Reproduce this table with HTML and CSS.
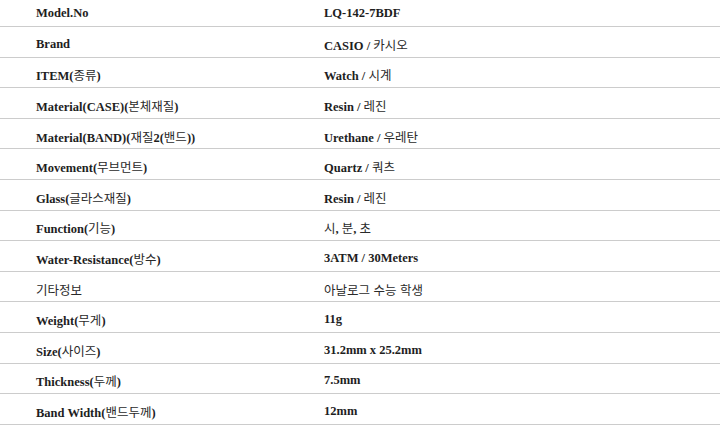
FILE: index.html
```html
<!DOCTYPE html>
<html lang="ko">
<head>
<meta charset="utf-8">
<title>Spec</title>
<link rel="stylesheet" href="styles.css">
</head>
<body>
<div class="spec">
  <div class="row"><div class="k">Model.No</div><div class="v">LQ-142-7BDF</div></div>
  <div class="row"><div class="k">Brand</div><div class="v">CASIO / <span class="ko">카시오</span></div></div>
  <div class="row"><div class="k">ITEM(<span class="ko">종류</span>)</div><div class="v">Watch / <span class="ko">시계</span></div></div>
  <div class="row"><div class="k">Material(CASE)(<span class="ko">본체재질</span>)</div><div class="v">Resin / <span class="ko">레진</span></div></div>
  <div class="row"><div class="k">Material(BAND)(<span class="ko">재질</span>2(<span class="ko">밴드</span>))</div><div class="v">Urethane / <span class="ko">우레탄</span></div></div>
  <div class="row"><div class="k">Movement(<span class="ko">무브먼트</span>)</div><div class="v">Quartz / <span class="ko">쿼츠</span></div></div>
  <div class="row"><div class="k">Glass(<span class="ko">글라스재질</span>)</div><div class="v">Resin / <span class="ko">레진</span></div></div>
  <div class="row"><div class="k">Function(<span class="ko">기능</span>)</div><div class="v"><span class="ko">시</span>, <span class="ko">분</span>, <span class="ko">초</span></div></div>
  <div class="row"><div class="k">Water-Resistance(<span class="ko">방수</span>)</div><div class="v">3ATM / 30Meters</div></div>
  <div class="row"><div class="k"><span class="ko">기타정보</span></div><div class="v"><span class="ko">아날로그 수능 학생</span></div></div>
  <div class="row"><div class="k">Weight(<span class="ko">무게</span>)</div><div class="v">11g</div></div>
  <div class="row"><div class="k">Size(<span class="ko">사이즈</span>)</div><div class="v">31.2mm x 25.2mm</div></div>
  <div class="row"><div class="k">Thickness(<span class="ko">두께</span>)</div><div class="v">7.5mm</div></div>
  <div class="row"><div class="k">Band Width(<span class="ko">밴드두께</span>)</div><div class="v">12mm</div></div>
</div>
</body>
</html>
```

FILE: styles.css
```css
html, body {
  margin: 0;
  padding: 0;
  background: #ffffff;
}
body {
  font-family: "Liberation Serif", "Noto Sans CJK KR", serif;
  font-size: 12.5px;
  font-weight: 700;
  color: #1e1e1e;
  overflow: hidden;
}
.spec {
  margin-top: -3.6px;
  width: 720px;
}
.row {
  display: grid;
  grid-template-columns: 324px 1fr;
  height: 30.6px;
  box-sizing: border-box;
  border-bottom: 1px solid #cccccc;
  align-items: center;
  padding-top: 5px;
}
.k {
  padding-left: 36px;
  white-space: nowrap;
}
.v {
  white-space: nowrap;
}
.ko {
  font-family: "Noto Sans CJK KR", sans-serif;
  font-weight: 400;
  color: #2a2a2a;
}
```
